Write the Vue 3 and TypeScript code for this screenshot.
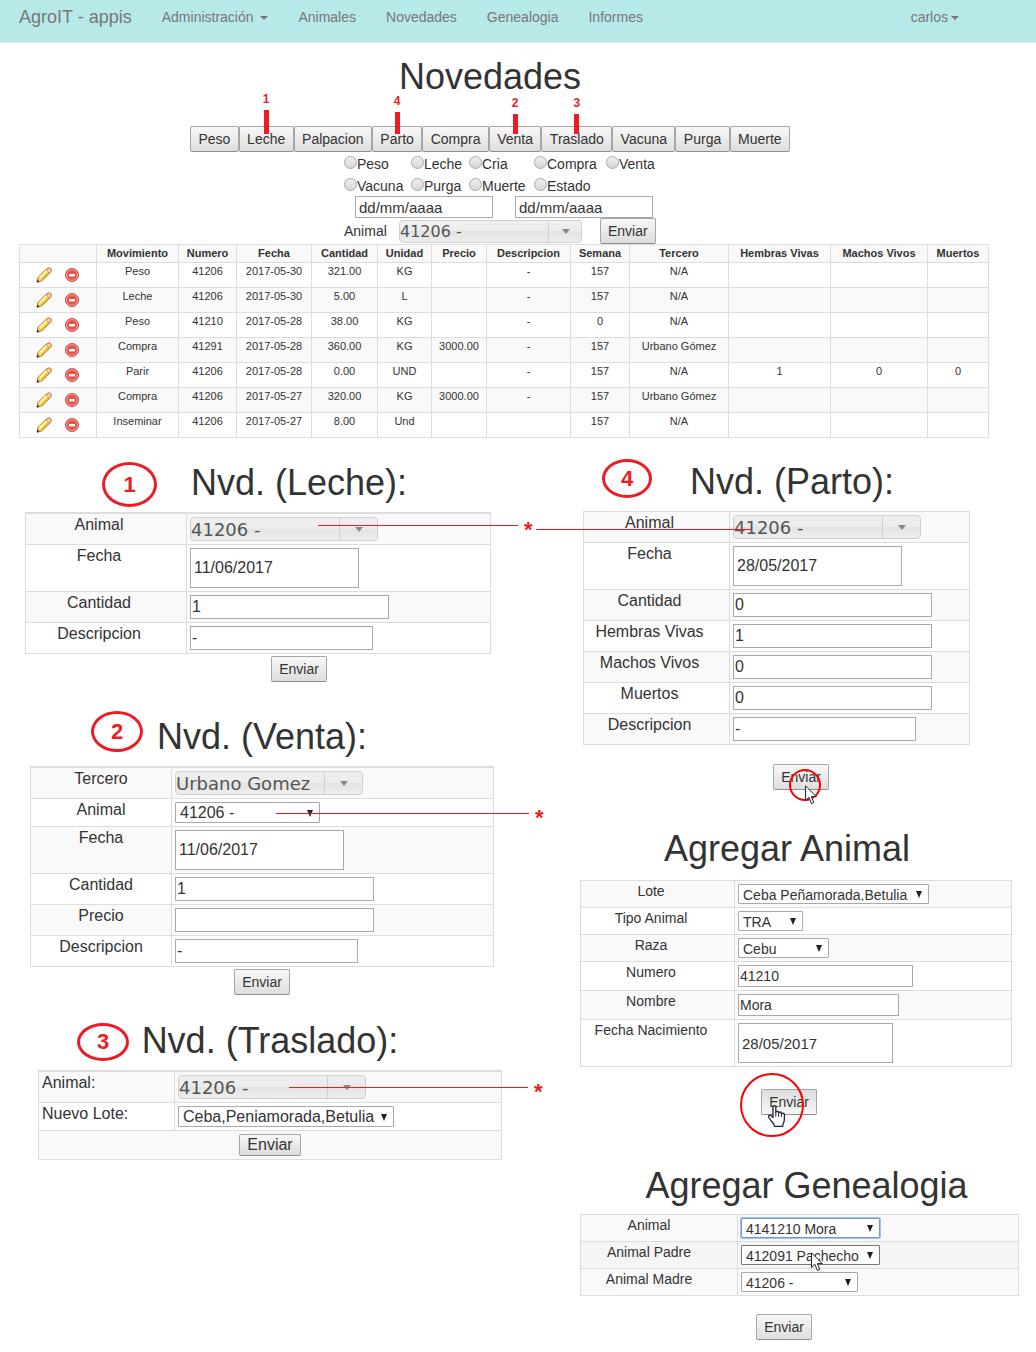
<script setup lang="ts">
type Kind = 'combo' | 'select' | 'date' | 'text'

interface Line {
  left: number
  top: number
  width: number
  star: boolean
}

interface Field {
  id: string
  label: string
  kind: Kind
  value: string
  width: number
  state?: 'focused' | 'hovered'
  line?: Line
}

interface Badge {
  text: string
  left: number
  top: number
  width: number
  height: number
}

interface Panel {
  id: string
  title: string
  labelWidth: number
  badge?: Badge
  fields: Field[]
  inlineSubmit?: boolean
  pointer?: 'arrow' | 'hand'
}

const links = ['Animales', 'Novedades', 'Genealogia', 'Informes']

const actions: { name: string; pin?: string; bar?: number }[] = [
  { name: 'Peso' },
  { name: 'Leche', pin: '1', bar: 24 },
  { name: 'Palpacion' },
  { name: 'Parto', pin: '4', bar: 22 },
  { name: 'Compra' },
  { name: 'Venta', pin: '2', bar: 20 },
  { name: 'Traslado', pin: '3', bar: 20 },
  { name: 'Vacuna' },
  { name: 'Purga' },
  { name: 'Muerte' },
]

const filters = ['Peso', 'Leche', 'Cria', 'Compra', 'Venta', 'Vacuna', 'Purga', 'Muerte', 'Estado']

const columns = [
  { name: '', width: 77 },
  { name: 'Movimiento', width: 82 },
  { name: 'Numero', width: 58 },
  { name: 'Fecha', width: 75 },
  { name: 'Cantidad', width: 66 },
  { name: 'Unidad', width: 54 },
  { name: 'Precio', width: 55 },
  { name: 'Descripcion', width: 84 },
  { name: 'Semana', width: 59 },
  { name: 'Tercero', width: 99 },
  { name: 'Hembras Vivas', width: 102 },
  { name: 'Machos Vivos', width: 97 },
  { name: 'Muertos', width: 61 },
]

const rows: string[][] = [
  ['Peso', '41206', '2017-05-30', '321.00', 'KG', '', '-', '157', 'N/A', '', '', ''],
  ['Leche', '41206', '2017-05-30', '5.00', 'L', '', '-', '157', 'N/A', '', '', ''],
  ['Peso', '41210', '2017-05-28', '38.00', 'KG', '', '-', '0', 'N/A', '', '', ''],
  ['Compra', '41291', '2017-05-28', '360.00', 'KG', '3000.00', '-', '157', 'Urbano Gómez', '', '', ''],
  ['Parir', '41206', '2017-05-28', '0.00', 'UND', '', '-', '157', 'N/A', '1', '0', '0'],
  ['Compra', '41206', '2017-05-27', '320.00', 'KG', '3000.00', '-', '157', 'Urbano Gómez', '', '', ''],
  ['Inseminar', '41206', '2017-05-27', '8.00', 'Und', '', '', '157', 'N/A', '', '', ''],
]

const panelColumns: Panel[][] = [
  [
    {
      id: 'leche',
      title: 'Nvd. (Leche):',
      labelWidth: 161,
      badge: { text: '1', left: 77, top: 0, width: 55, height: 45 },
      fields: [
        { id: 'animal', label: 'Animal', kind: 'combo', value: '41206 -', width: 188, line: { left: 128, top: 8, width: 200, star: true } },
        { id: 'fecha', label: 'Fecha', kind: 'date', value: '11/06/2017', width: 169 },
        { id: 'cantidad', label: 'Cantidad', kind: 'text', value: '1', width: 199 },
        { id: 'descripcion', label: 'Descripcion', kind: 'text', value: '-', width: 183 },
      ],
    },
    {
      id: 'venta',
      title: 'Nvd. (Venta):',
      labelWidth: 141,
      badge: { text: '2', left: 61, top: -5, width: 52, height: 41 },
      fields: [
        { id: 'tercero', label: 'Tercero', kind: 'combo', value: 'Urbano Gomez', width: 188 },
        { id: 'animal', label: 'Animal', kind: 'select', value: '41206 -', width: 145, line: { left: 101, top: 11, width: 253, star: true } },
        { id: 'fecha', label: 'Fecha', kind: 'date', value: '11/06/2017', width: 169 },
        { id: 'cantidad', label: 'Cantidad', kind: 'text', value: '1', width: 199 },
        { id: 'precio', label: 'Precio', kind: 'text', value: '', width: 199 },
        { id: 'descripcion', label: 'Descripcion', kind: 'text', value: '-', width: 183 },
      ],
    },
    {
      id: 'traslado',
      title: 'Nvd. (Traslado):',
      labelWidth: 136,
      badge: { text: '3', left: 39, top: 3, width: 52, height: 38 },
      inlineSubmit: true,
      fields: [
        { id: 'animal', label: 'Animal:', kind: 'combo', value: '41206 -', width: 188, line: { left: 111, top: 12, width: 239, star: true } },
        { id: 'lote', label: 'Nuevo Lote:', kind: 'select', value: 'Ceba,Peniamorada,Betulia', width: 216 },
      ],
    },
  ],
  [
    {
      id: 'parto',
      title: 'Nvd. (Parto):',
      labelWidth: 146,
      badge: { text: '4', left: 19, top: -2, width: 50, height: 39 },
      pointer: 'arrow',
      fields: [
        { id: 'animal', label: 'Animal', kind: 'combo', value: '41206 -', width: 188, line: { left: -197, top: 14, width: 215, star: false } },
        { id: 'fecha', label: 'Fecha', kind: 'date', value: '28/05/2017', width: 169 },
        { id: 'cantidad', label: 'Cantidad', kind: 'text', value: '0', width: 199 },
        { id: 'hembras', label: 'Hembras Vivas', kind: 'text', value: '1', width: 199 },
        { id: 'machos', label: 'Machos Vivos', kind: 'text', value: '0', width: 199 },
        { id: 'muertos', label: 'Muertos', kind: 'text', value: '0', width: 199 },
        { id: 'descripcion', label: 'Descripcion', kind: 'text', value: '-', width: 183 },
      ],
    },
    {
      id: 'nuevo',
      title: 'Agregar Animal',
      labelWidth: 154,
      pointer: 'hand',
      fields: [
        { id: 'lote', label: 'Lote', kind: 'select', value: 'Ceba Peñamorada,Betulia', width: 191 },
        { id: 'tipo', label: 'Tipo Animal', kind: 'select', value: 'TRA', width: 65 },
        { id: 'raza', label: 'Raza', kind: 'select', value: 'Cebu', width: 91 },
        { id: 'numero', label: 'Numero', kind: 'text', value: '41210', width: 175 },
        { id: 'nombre', label: 'Nombre', kind: 'text', value: 'Mora', width: 161 },
        { id: 'nacimiento', label: 'Fecha Nacimiento', kind: 'date', value: '28/05/2017', width: 155 },
      ],
    },
    {
      id: 'genealogia',
      title: 'Agregar Genealogia',
      labelWidth: 157,
      fields: [
        { id: 'animal', label: 'Animal', kind: 'select', value: '4141210 Mora', width: 139, state: 'focused' },
        { id: 'padre', label: 'Animal Padre', kind: 'select', value: '412091 Pachecho', width: 139, state: 'hovered' },
        { id: 'madre', label: 'Animal Madre', kind: 'select', value: '41206 -', width: 117 },
      ],
    },
  ],
]
</script>

<template>
  <div class="page">
    <nav class="navbar">
      <a class="brand" href="#">AgroIT - appis</a>
      <a class="link" href="#">Administración <span class="caret"></span></a>
      <a v-for="link in links" :key="link" class="link" href="#">{{ link }}</a>
      <a class="link user" href="#">carlos<span class="caret"></span></a>
    </nav>

    <main>
      <section class="records">
        <div class="head">
          <h1>Novedades</h1>
          <div class="toolbar">
            <span v-for="action in actions" :key="action.name" class="tool">
              <button type="button" class="btn">{{ action.name }}</button>
              <span v-if="action.pin" class="pin">
                <span>{{ action.pin }}</span>
                <span class="bar" :style="{ height: action.bar + 'px' }"></span>
              </span>
            </span>
          </div>
        </div>

        <form class="filters" @submit.prevent>
          <div class="radios">
            <label v-for="name in filters" :key="name"><input type="radio" name="movimiento" />{{ name }}</label>
          </div>
          <div class="dates">
            <input type="text" value="dd/mm/aaaa" aria-label="Desde" />
            <input type="text" value="dd/mm/aaaa" aria-label="Hasta" />
          </div>
          <div class="search">
            <label for="filtro-animal">Animal</label>
            <span class="control combo">
              <select id="filtro-animal"><option>41206 -</option></select>
              <svg class="arrow" width="8" height="5" viewBox="0 0 8 5"><path d="M0 0h8L4 5z" fill="#888" /></svg>
            </span>
            <button type="submit" class="btn">Enviar</button>
          </div>
        </form>

        <table class="data">
          <colgroup>
            <col v-for="column in columns" :key="column.name" :style="{ width: column.width + 'px' }" />
          </colgroup>
          <thead>
            <tr>
              <th v-for="column in columns" :key="column.name">{{ column.name }}</th>
            </tr>
          </thead>
          <tbody>
            <tr v-for="(row, index) in rows" :key="index">
              <td>
                <div class="tools">
                  <button type="button" aria-label="Editar">
                    <svg width="16" height="16" viewBox="0 0 16 16">
                      <path d="M1.6 10.800 10.200 2.200Q12.300.2 14.400 1.300 16.400 2.800 14.600 5.200L5.800 14 1.200 15.200z" fill="#f5d54a" stroke="#b07f22" />
                      <path d="m3.600 11 7.600-7.600" stroke="#fff6b8" stroke-width="2" />
                      <path d="m5.500 12.800 7.800-7.800" stroke="#dcaa28" />
                      <path d="m10.300 2.900 1.900-1.500q1.700-.7 2.700.6.800 1.300-.3 2.900l-1.200 1.200z" fill="#f5cfae" stroke="#cb8045" stroke-width=".7" />
                      <path d="m1.800 11.200 3.600 2.900-3.800 1z" fill="#e7c69a" />
                      <path d="m1.300 12.600 2.400 2.100-3 .9z" fill="#443014" />
                    </svg>
                  </button>
                  <button type="button" aria-label="Eliminar">
                    <svg width="16" height="16" viewBox="0 0 16 16">
                      <circle cx="8" cy="8" r="6.5" fill="#e5544b" stroke="#cf514a" />
                      <circle cx="8" cy="8" r="5.4" fill="none" stroke="#f4a29b" />
                      <path d="M5 7h6v2.400H5z" fill="#fff" />
                    </svg>
                  </button>
                </div>
              </td>
              <td v-for="(cell, i) in row" :key="i">{{ cell }}</td>
            </tr>
          </tbody>
        </table>
      </section>

      <div class="columns">
        <div v-for="(panels, c) in panelColumns" :key="c" class="column">
          <form v-for="panel in panels" :key="panel.id" class="panel" :class="panel.id" @submit.prevent>
            <h2>{{ panel.title }}</h2>
            <span
              v-if="panel.badge"
              class="badge"
              :style="{
                left: panel.badge.left + 'px',
                top: panel.badge.top + 'px',
                width: panel.badge.width + 'px',
                height: panel.badge.height + 'px',
              }"
            >{{ panel.badge.text }}</span>
            <table class="fields">
              <colgroup>
                <col :style="{ width: panel.labelWidth + 'px' }" />
                <col />
              </colgroup>
              <tbody>
                <tr v-for="field in panel.fields" :key="field.id">
                  <td class="name"><label :for="panel.id + '-' + field.id">{{ field.label }}</label></td>
                  <td>
                    <div class="control" :class="[field.kind, field.state]" :style="{ width: field.width + 'px' }">
                      <template v-if="field.kind === 'combo' || field.kind === 'select'">
                        <select :id="panel.id + '-' + field.id"><option>{{ field.value }}</option></select>
                        <svg v-if="field.kind === 'combo'" class="arrow" width="8" height="5" viewBox="0 0 8 5"><path d="M0 0h8L4 5z" fill="#888" /></svg>
                        <svg v-else class="arrow" width="6" height="7" viewBox="0 0 6 7"><path d="M0 0h6L3 7z" fill="#222" /></svg>
                      </template>
                      <input v-else :id="panel.id + '-' + field.id" type="text" :value="field.value" />
                      <span
                        v-if="field.line"
                        class="line"
                        :style="{ left: field.line.left + 'px', top: field.line.top + 'px', width: field.line.width + 'px' }"
                      ><span v-if="field.line.star" class="star">*</span></span>
                      <svg v-if="field.state === 'hovered'" class="cursor" width="13" height="20" viewBox="0 0 13 20">
                        <path d="M.5.8v14.800l3.400-3.300 2.500 6.200 2.400-1-2.500-5.900h5z" fill="#fff" stroke="#223" />
                      </svg>
                    </div>
                  </td>
                </tr>
                <tr v-if="panel.inlineSubmit">
                  <td colspan="2" class="submit"><button type="submit" class="btn">Enviar</button></td>
                </tr>
              </tbody>
            </table>
            <div v-if="!panel.inlineSubmit" class="actions">
              <span class="tool">
                <button type="submit" class="btn">Enviar</button>
                <span v-if="panel.pointer" class="ring"></span>
                <svg v-if="panel.pointer === 'arrow'" class="cursor" width="13" height="20" viewBox="0 0 13 20">
                  <path d="M.5.8v14.800l3.400-3.300 2.500 6.200 2.400-1-2.500-5.900h5z" fill="#fff" stroke="#223" />
                </svg>
                <svg v-if="panel.pointer === 'hand'" class="cursor" width="18" height="22" viewBox="0 0 18 22">
                  <path
                    d="M5 12.500V2Q5 .6 6.400.6T7.800 2v5.500q0-1.200 1.400-1.200T10.600 7.800v.3q.2-1.100 1.400-1.100t1.400 1.500v.5q.3-.9 1.500-.9 1.300 0 1.500 1.600v4.500q0 2.200-1.200 4.100l-.6 3H6.500l-.7-2.300Q2.800 15.700.9 12.500.2 11 1.300 10.400t2.200.6z"
                    fill="#fff"
                    stroke="#223"
                    stroke-width="1.300"
                    stroke-linejoin="round"
                  />
                  <path d="M7.800 7.500v4.200M10.600 8.100v3.600M13.400 9v2.800" stroke="#223" />
                </svg>
              </span>
            </div>
          </form>
        </div>
      </div>
    </main>
  </div>
</template>

<style>
body {
  margin: 0;
  background: #fff;
}
</style>

<style scoped>
* {
  box-sizing: border-box;
}

.page {
  overflow-x: hidden;
  font: 14px/20px "Liberation Sans", Arial, sans-serif;
  color: #333;
}

.navbar {
  display: flex;
  align-items: flex-start;
  height: 43px;
  padding: 7px 62px 0 4px;
  background: #b7e9e9;
  border-bottom: 1px solid #dfe7e7;
}

.navbar a {
  padding: 0 15px;
  color: #777;
  text-decoration: none;
  white-space: nowrap;
}

.navbar .brand {
  font-size: 18px;
}

.navbar .user {
  margin-left: auto;
}

.caret {
  display: inline-block;
  margin-left: 3px;
  vertical-align: middle;
  border: 4px solid transparent;
  border-top-color: #777;
  border-bottom: 0;
}

.records {
  padding: 14px 47px 0 19px;
}

.head {
  margin-right: 28px;
}

h1,
h2 {
  margin: 0;
  font-size: 36px;
  font-weight: 400;
  text-align: center;
  white-space: nowrap;
}

h1 {
  margin-bottom: 29px;
  line-height: 40px;
}

.toolbar {
  display: flex;
  max-width: 600px;
  margin: 0 auto;
}

.tool {
  position: relative;
  display: block;
}

.toolbar .tool {
  flex: 1 1 auto;
}

.btn {
  display: block;
  height: 26px;
  margin: 0;
  padding: 0 7px;
  font: inherit;
  color: #333;
  background: linear-gradient(#f8f8f8, #ddd);
  border: 1px solid #a6a6a6;
  border-bottom-color: #8f8f8f;
  border-radius: 2px;
}

.toolbar .btn {
  width: 100%;
}

.pin {
  position: absolute;
  bottom: 18px;
  left: 50%;
  width: 6px;
  margin-left: -3px;
  display: flex;
  flex-direction: column;
  align-items: center;
  gap: 6px;
  font-size: 12px;
  font-weight: 700;
  line-height: 10px;
  color: #ed1c24;
}

.bar {
  width: 5px;
  background: #ed1c24;
}

.filters {
  width: 320px;
  margin: 0 auto;
  padding-right: 8px;
}

.radios {
  display: grid;
  grid-template-columns: 67px 58px 65px 72px 50px;
}

.radios label {
  display: flex;
  align-items: flex-start;
  height: 22px;
  line-height: 24px;
}

.radios input {
  flex: none;
  appearance: none;
  width: 13px;
  height: 13px;
  margin: 4px 0 0;
  border: 1px solid #a9a9a9;
  border-radius: 50%;
  background: linear-gradient(#eee, #d8d8d8);
}

.dates {
  display: flex;
  gap: 22px;
  padding-left: 11px;
}

.dates input {
  width: 138px;
  height: 22px;
}

input[type="text"] {
  display: block;
  margin: 0;
  padding: 0 1px;
  font: inherit;
  color: #333;
  background: #fff;
  border: 1px solid #a9a9a9;
  border-radius: 0;
}

.dates input[type="text"],
.nuevo .date input[type="text"] {
  padding: 0 3px;
  font-size: 15px;
}

.search {
  display: flex;
  align-items: center;
}

.search label {
  width: 55px;
}

.search .combo {
  width: 183px;
  height: 23px;
  margin-right: 18px;
}

.data {
  width: 100%;
  table-layout: fixed;
  border-collapse: separate;
  border-spacing: 0;
  border: solid #ddd;
  border-width: 1px 0 0 1px;
  font-size: 11px;
  line-height: 16px;
  text-align: center;
}

.data th,
.data td {
  height: 25px;
  padding: 0;
  border: solid #ddd;
  border-width: 0 1px 1px 0;
  vertical-align: top;
  white-space: nowrap;
}

.data th {
  height: 18px;
  background: #f9f9f9;
}

.data tbody tr:nth-child(even) {
  background: #f9f9f9;
}

.tools {
  display: flex;
  gap: 12px;
  padding: 4px 0 0 16px;
}

.tools button {
  height: 16px;
  padding: 0;
  border: 0;
  background: none;
}

.tools svg {
  display: block;
}

.columns {
  display: grid;
  grid-template-columns: 560fr 476fr;
  align-items: start;
}

.column {
  min-width: 0;
}

.panel {
  position: relative;
}

h2 {
  margin-bottom: 8px;
  line-height: 42px;
}

.badge {
  position: absolute;
  display: flex;
  align-items: center;
  justify-content: center;
  border: 3px solid #ed1c24;
  border-radius: 50%;
  font-size: 22px;
  font-weight: 700;
  color: #ed1c24;
}

.fields {
  width: 100%;
  table-layout: fixed;
  border-collapse: separate;
  border-spacing: 0;
  border: solid #ddd;
  border-width: 1px 0 0 1px;
  font-size: 16px;
}

.fields td {
  padding: 3px;
  border: solid #ddd;
  border-width: 0 1px 1px 0;
  vertical-align: top;
}

.fields .name {
  padding: 1px 3px 0;
  text-align: center;
}

.fields tr:nth-child(odd) {
  background: #f9f9f9;
}

.control {
  position: relative;
  height: 24px;
}

.control.select {
  height: 21px;
}

.control.date {
  height: 40px;
}

.control input[type="text"] {
  width: 100%;
  height: 100%;
}

.control.date input[type="text"] {
  padding: 0 3px;
}

.control select {
  display: block;
  appearance: none;
  width: 100%;
  height: 100%;
  margin: 0;
  padding: 0 0 0 4px;
  font: inherit;
  color: #333;
  background: #fff;
  border: 1px solid #a9a9a9;
  border-radius: 1px;
}

.control.combo select {
  padding: 2px 0 0;
  font-family: "DejaVu Sans", Verdana, sans-serif;
  font-size: 18px;
  color: #555;
  background: linear-gradient(#f0f0f0, #ebebeb 50%, #e3e3e3 50%, #ededed);
  border-color: #d0d0d0;
  border-radius: 4px;
}

.search .control.combo select {
  padding: 1px 0 0;
  font-size: 16px;
}

.combo::after {
  content: "";
  position: absolute;
  top: 1px;
  bottom: 1px;
  right: 38px;
  width: 1px;
  background: #d0d0d0;
}

.search .combo::after {
  right: 33px;
}

.arrow {
  position: absolute;
  top: 50%;
  right: 7px;
  margin-top: -3px;
  pointer-events: none;
}

.combo .arrow {
  right: 15px;
  margin-top: -2px;
}

.search .combo .arrow {
  right: 12px;
}

.line {
  position: absolute;
  z-index: 1;
  height: 1px;
  background: #ed1c24;
}

.star {
  position: absolute;
  top: -7px;
  left: 100%;
  margin-left: 6px;
  font-size: 22px;
  font-weight: 700;
  line-height: 24px;
  color: #ed1c24;
}

.actions {
  display: flex;
  justify-content: center;
  padding-top: 2px;
}

.submit {
  text-align: center;
}

.submit .btn {
  height: 22px;
  margin: 0 auto;
}

.cursor,
.ring {
  position: absolute;
  z-index: 1;
  pointer-events: none;
}

.ring {
  border: 2px solid #f00;
  border-radius: 50%;
}

.select .cursor {
  top: 7px;
  left: 70px;
}

.leche {
  margin: 24px 69px 34px 25px;
}

.leche h2,
.leche .actions {
  padding-left: 82px;
}

.leche .name,
.parto .name {
  padding-right: 17px;
}

.venta {
  margin: 0 66px 25px 30px;
}

.traslado {
  margin: 0 58px 0 38px;
}

.leche .fields,
.venta .fields,
.traslado .fields {
  border-top-width: 2px;
}

.traslado .name {
  text-align: left;
}

.parto {
  margin: 23px 66px 38px 23px;
}

.parto h2 {
  padding-left: 31px;
}

.parto .actions {
  padding: 19px 0 0 49px;
}

.parto .ring {
  top: 5px;
  left: 16px;
  width: 32px;
  height: 32px;
}

.parto .actions .cursor {
  top: 21px;
  left: 32px;
}

.nuevo {
  margin: 0 24px 50px 20px;
}

.nuevo h2 {
  margin-bottom: 10px;
  padding-right: 18px;
}

.nuevo .actions {
  padding: 22px 14px 0 0;
}

.nuevo .btn {
  background: linear-gradient(#ddd, #f8f8f8);
}

.nuevo .ring {
  top: -16px;
  left: -21px;
  width: 64px;
  height: 64px;
}

.nuevo .actions .cursor {
  top: 16px;
  left: 7px;
}

.nuevo .fields,
.genealogia .fields {
  font-size: 14px;
}

.nuevo .name {
  padding: 0 16px 0 3px;
}

.genealogia .name {
  padding: 0 23px 0 3px;
}

.nuevo .text {
  height: 22px;
}

.nuevo .select,
.genealogia .select {
  height: 20px;
}

.nuevo .select select,
.genealogia .select select {
  padding-bottom: 2px;
}

.genealogia {
  margin: 0 17px 12px 20px;
}

.genealogia h2 {
  margin-bottom: 7px;
  padding-left: 14px;
}

.genealogia .actions {
  padding: 18px 31px 0 0;
}

.genealogia .fields tr:nth-child(even) {
  background: #f5f5f5;
}

.control.focused select {
  border-color: #7098dc;
  outline: 1px solid #a5c1f0;
}

.control.hovered select {
  border-color: #777;
}
</style>
